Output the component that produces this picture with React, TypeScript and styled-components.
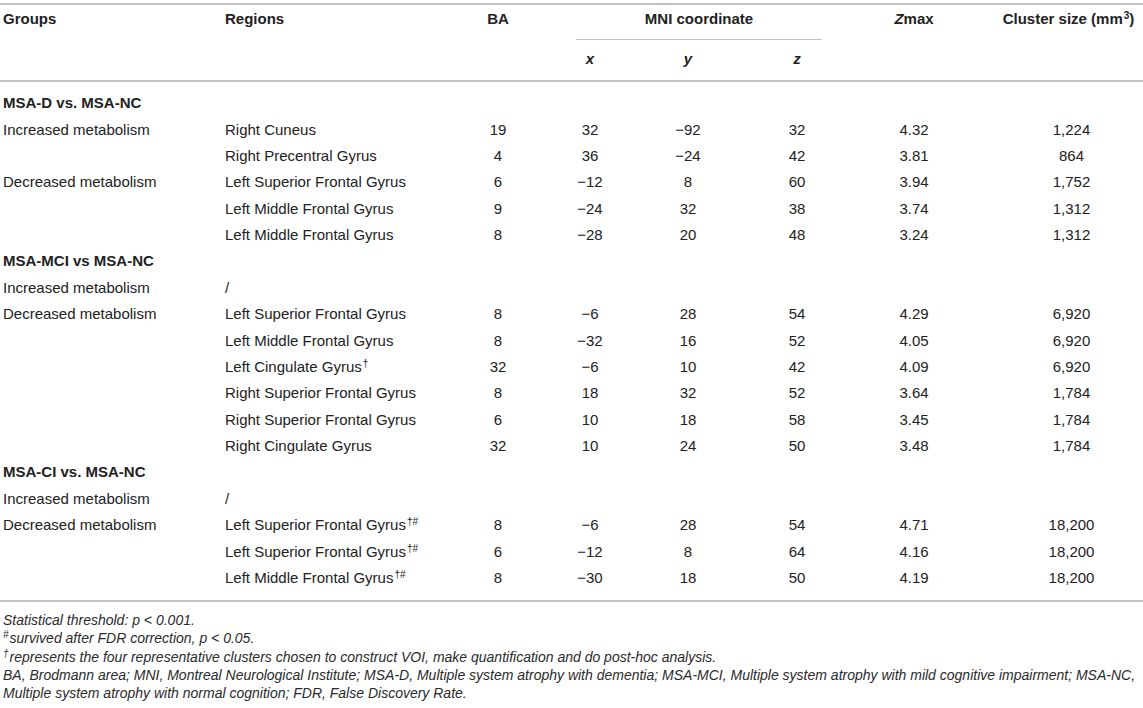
import React from "react";
import styled, { createGlobalStyle } from "styled-components";

const Global = createGlobalStyle`
  html, body { margin: 0; padding: 0; background: #ffffff; }
  body { font-family: "Liberation Sans", Arial, Helvetica, sans-serif; color: #222; }
  #root { padding-top: 3px; }
`;

const RULE = "#c3c3c3";

const Table = styled.table`
  width: 1143px;
  table-layout: fixed;
  border-collapse: separate;
  border-spacing: 0;
  font-size: 15px;
  color: #222;
`;

const Col = styled.col<{ $w: number }>`
  width: ${(p) => p.$w}px;
`;

const Th = styled.th<{ $align?: "left" | "center"; $span?: boolean; $pl?: number }>`
  font-weight: bold;
  line-height: 18px;
  text-align: ${(p) => p.$align ?? "center"};
  vertical-align: top;
  padding: 5px 0 0 ${(p) => p.$pl ?? 0}px;
  border-top: 2px solid ${RULE};
  border-bottom: ${(p) => (p.$span ? `2px solid ${RULE}` : "none")};
  white-space: nowrap;
`;

const SubTh = styled.th`
  font-weight: bold;
  font-style: italic;
  line-height: 18px;
  text-align: center;
  padding: 10px 0 12px 0;
  border-bottom: 2px solid ${RULE};
`;

const GroupRule = styled.div`
  margin: 0 30px 0 30px;
  padding-bottom: 11px;
  border-bottom: 1px solid ${RULE};
`;

const Td = styled.td<{
  $align?: "left" | "center";
  $pl?: number;
  $first?: boolean;
  $last?: boolean;
  $bold?: boolean;
}>`
  line-height: 18px;
  text-align: ${(p) => p.$align ?? "center"};
  vertical-align: top;
  white-space: nowrap;
  font-weight: ${(p) => (p.$bold ? "bold" : "normal")};
  padding: ${(p) => (p.$first ? 12.2 : 4.2)}px 0 ${(p) => (p.$last ? 13.2 : 4.2)}px
    ${(p) => p.$pl ?? 0}px;
  border-bottom: ${(p) => (p.$last ? `2px solid ${RULE}` : "none")};
`;

const Sup = styled.sup`
  font-size: 10px;
  line-height: 0;
  vertical-align: 5px;
  margin-left: 1px;
`;

const Notes = styled.div`
  padding: 9px 0 0 3px;
  font-size: 14px;
  font-style: italic;
  line-height: 18.3px;
  color: #2a2a2a;
`;

const NoteLine = styled.div`
  white-space: nowrap;
`;

const NoteSup = styled.sup`
  font-size: 10px;
  line-height: 0;
  vertical-align: 5px;
  margin-right: 1px;
`;

type Row = {
  group?: string;
  region?: string;
  mark?: string;
  ba?: string;
  x?: string;
  y?: string;
  z?: string;
  zmax?: string;
  size?: string;
  heading?: string;
};

const rows: Row[] = [
  { heading: "MSA-D vs. MSA-NC" },
  { group: "Increased metabolism", region: "Right Cuneus", ba: "19", x: "32", y: "−92", z: "32", zmax: "4.32", size: "1,224" },
  { region: "Right Precentral Gyrus", ba: "4", x: "36", y: "−24", z: "42", zmax: "3.81", size: "864" },
  { group: "Decreased metabolism", region: "Left Superior Frontal Gyrus", ba: "6", x: "−12", y: "8", z: "60", zmax: "3.94", size: "1,752" },
  { region: "Left Middle Frontal Gyrus", ba: "9", x: "−24", y: "32", z: "38", zmax: "3.74", size: "1,312" },
  { region: "Left Middle Frontal Gyrus", ba: "8", x: "−28", y: "20", z: "48", zmax: "3.24", size: "1,312" },
  { heading: "MSA-MCI vs MSA-NC" },
  { group: "Increased metabolism", region: "/" },
  { group: "Decreased metabolism", region: "Left Superior Frontal Gyrus", ba: "8", x: "−6", y: "28", z: "54", zmax: "4.29", size: "6,920" },
  { region: "Left Middle Frontal Gyrus", ba: "8", x: "−32", y: "16", z: "52", zmax: "4.05", size: "6,920" },
  { region: "Left Cingulate Gyrus", mark: "†", ba: "32", x: "−6", y: "10", z: "42", zmax: "4.09", size: "6,920" },
  { region: "Right Superior Frontal Gyrus", ba: "8", x: "18", y: "32", z: "52", zmax: "3.64", size: "1,784" },
  { region: "Right Superior Frontal Gyrus", ba: "6", x: "10", y: "18", z: "58", zmax: "3.45", size: "1,784" },
  { region: "Right Cingulate Gyrus", ba: "32", x: "10", y: "24", z: "50", zmax: "3.48", size: "1,784" },
  { heading: "MSA-CI vs. MSA-NC" },
  { group: "Increased metabolism", region: "/" },
  { group: "Decreased metabolism", region: "Left Superior Frontal Gyrus", mark: "†#", ba: "8", x: "−6", y: "28", z: "54", zmax: "4.71", size: "18,200" },
  { region: "Left Superior Frontal Gyrus", mark: "†#", ba: "6", x: "−12", y: "8", z: "64", zmax: "4.16", size: "18,200" },
  { region: "Left Middle Frontal Gyrus", mark: "†#", ba: "8", x: "−30", y: "18", z: "50", zmax: "4.19", size: "18,200" },
];

export default function App() {
  return (
    <>
      <Global />
      <Table>
        <colgroup>
          <Col $w={222} />
          <Col $w={228} />
          <Col $w={96} />
          <Col $w={88} />
          <Col $w={108} />
          <Col $w={110} />
          <Col $w={124} />
          <Col $w={167} />
        </colgroup>
        <thead>
          <tr>
            <Th rowSpan={2} $align="left" $pl={3} $span>Groups</Th>
            <Th rowSpan={2} $align="left" $pl={3} $span>Regions</Th>
            <Th rowSpan={2} $span>BA</Th>
            <Th colSpan={3}>
              <GroupRule>MNI coordinate</GroupRule>
            </Th>
            <Th rowSpan={2} $span>
              <i>Z</i>max
            </Th>
            <Th rowSpan={2} $span $pl={18}>
              Cluster size (mm<Sup>3</Sup>)
            </Th>
          </tr>
          <tr>
            <SubTh>x</SubTh>
            <SubTh>y</SubTh>
            <SubTh>z</SubTh>
          </tr>
        </thead>
        <tbody>
          {rows.map((r, i) => {
            const first = i === 0;
            const last = i === rows.length - 1;
            if (r.heading) {
              return (
                <tr key={i}>
                  <Td colSpan={8} $align="left" $pl={3} $bold $first={first} $last={last}>
                    {r.heading}
                  </Td>
                </tr>
              );
            }
            return (
              <tr key={i}>
                <Td $align="left" $pl={3} $first={first} $last={last}>{r.group ?? ""}</Td>
                <Td $align="left" $pl={3} $first={first} $last={last}>
                  {r.region}
                  {r.mark ? <Sup>{r.mark}</Sup> : null}
                </Td>
                <Td $first={first} $last={last}>{r.ba ?? ""}</Td>
                <Td $first={first} $last={last}>{r.x ?? ""}</Td>
                <Td $first={first} $last={last}>{r.y ?? ""}</Td>
                <Td $first={first} $last={last}>{r.z ?? ""}</Td>
                <Td $first={first} $last={last}>{r.zmax ?? ""}</Td>
                <Td $first={first} $last={last} $pl={24}>{r.size ?? ""}</Td>
              </tr>
            );
          })}
        </tbody>
      </Table>
      <Notes>
        <NoteLine>Statistical threshold: p &lt; 0.001.</NoteLine>
        <NoteLine>
          <NoteSup>#</NoteSup>survived after FDR correction, p &lt; 0.05.
        </NoteLine>
        <NoteLine>
          <NoteSup>†</NoteSup>represents the four representative clusters chosen to construct VOI, make quantification and do post-hoc analysis.
        </NoteLine>
        <NoteLine>
          BA, Brodmann area; MNI, Montreal Neurological Institute; MSA-D, Multiple system atrophy with dementia; MSA-MCI, Multiple system atrophy with mild cognitive impairment; MSA-NC,
        </NoteLine>
        <NoteLine>Multiple system atrophy with normal cognition; FDR, False Discovery Rate.</NoteLine>
      </Notes>
    </>
  );
}
